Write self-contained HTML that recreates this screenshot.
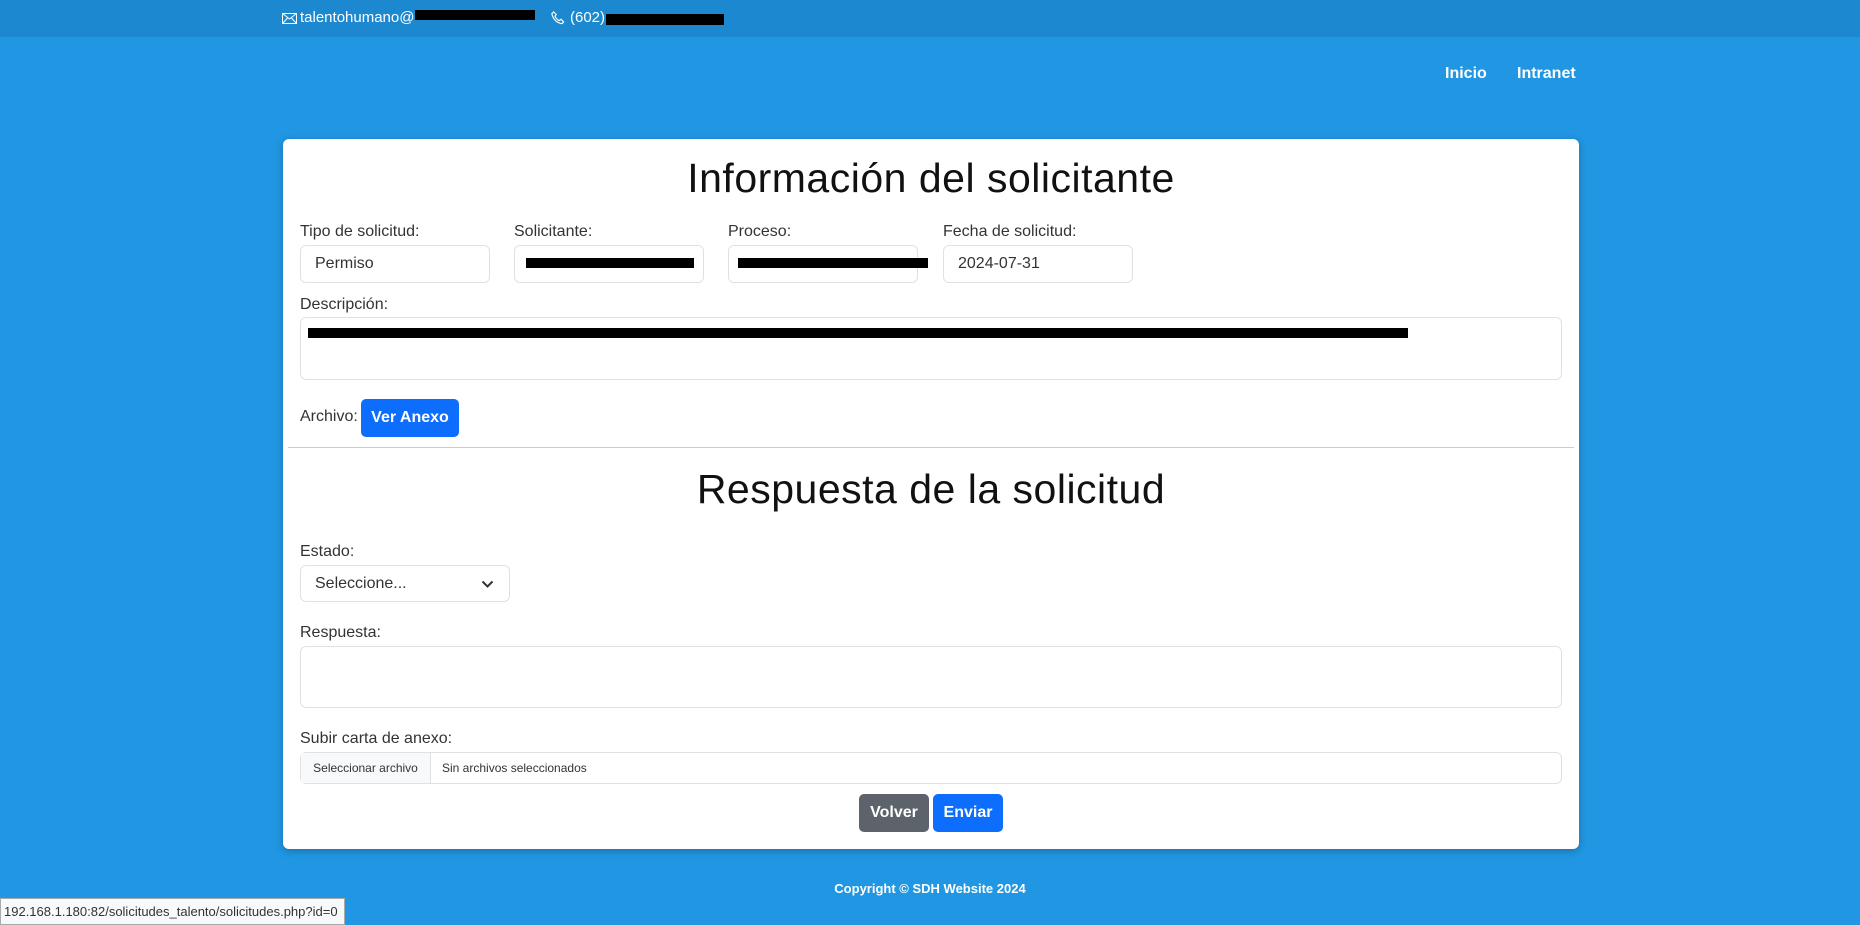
<!DOCTYPE html>
<html><head><meta charset="utf-8"><style>
*{box-sizing:border-box;margin:0;padding:0}
body{width:1860px;height:925px;background:#2196e2;font-family:"Liberation Sans",sans-serif;position:relative;overflow:hidden;color:#212529}
.top{position:absolute;left:0;top:0;width:1860px;height:37px;background:#1c88d0;color:#fff;font-size:15px}
.a{position:absolute}
.nav{color:#fff;font-weight:bold;font-size:16px}
.card{position:absolute;left:283px;top:139px;width:1296px;height:710px;background:#fff;border-radius:6px;box-shadow:0 2px 8px rgba(0,0,0,.25)}
h1{position:absolute;left:0;width:100%;text-align:center;font-weight:normal;font-size:41px;color:#111;letter-spacing:0.5px}
.lbl{position:absolute;font-size:16px;color:#333}
.inp{position:absolute;border:1px solid #dee2e6;border-radius:6px;background:#fff;font-size:16px;padding-left:14px;display:flex;align-items:center;color:#333}
.red{position:absolute;background:#000;height:13px}
.btn{position:absolute;color:#fff;border-radius:5px;font-size:16px;font-weight:bold;display:flex;align-items:center;justify-content:center}
</style></head><body>
<div class="top">
<svg class="a" style="left:282px;top:13px" width="15" height="11" viewBox="0 0 15 11"><rect x="0.5" y="0.5" width="14" height="10" fill="none" stroke="#fff"/><path d="M0.5 0.5L7.5 6L14.5 0.5M0.5 10.5L5.5 5M14.5 10.5L9.5 5" fill="none" stroke="#fff"/></svg>
<span class="a" style="left:300px;top:9px">talentohumano@</span><div class="red" style="left:415px;top:10px;width:120px;height:10px"></div>
<svg class="a" style="left:551px;top:11px" width="14" height="14" viewBox="0 0 16 16"><path d="M3 1l3 3-1.5 2c1 2 3 4 5 5l2-1.5 3 3-2 2C7 14 2 9 1 3z" fill="none" stroke="#fff" stroke-width="1.3"/></svg>
<span class="a" style="left:570px;top:9px">(602)</span><div class="red" style="left:606px;top:14px;width:118px;height:11px"></div>
</div>
<div class="a nav" style="left:1445px;top:65px">Inicio</div>
<div class="a nav" style="left:1517px;top:65px">Intranet</div>
<div class="card">
<h1 style="top:16px">Información del solicitante</h1>
<div class="lbl" style="left:17px;top:84px">Tipo de solicitud:</div>
<div class="lbl" style="left:231px;top:84px">Solicitante:</div>
<div class="lbl" style="left:445px;top:84px">Proceso:</div>
<div class="lbl" style="left:660px;top:84px">Fecha de solicitud:</div>
<div class="inp" style="left:17px;top:106px;width:190px;height:38px">Permiso</div>
<div class="inp" style="left:231px;top:106px;width:190px;height:38px"></div><div class="red" style="left:243px;top:119px;width:168px;height:10px"></div>
<div class="inp" style="left:445px;top:106px;width:190px;height:38px"></div><div class="red" style="left:455px;top:119px;width:190px;height:10px"></div>
<div class="inp" style="left:660px;top:106px;width:190px;height:38px">2024-07-31</div>
<div class="lbl" style="left:17px;top:157px">Descripción:</div>
<div class="inp" style="left:17px;top:178px;width:1262px;height:63px"></div>
<div class="red" style="left:25px;top:189px;width:1100px;height:10px"></div>
<div class="lbl" style="left:17px;top:269px">Archivo:</div>
<div class="btn" style="left:78px;top:260px;width:98px;height:38px;background:#0d6efd">Ver Anexo</div>
<div class="a" style="left:5px;top:308px;width:1286px;height:1px;background:#ccc"></div>
<h1 style="top:327px">Respuesta de la solicitud</h1>
<div class="lbl" style="left:17px;top:404px">Estado:</div>
<div class="inp" style="left:17px;top:426px;width:210px;height:37px">Seleccione...<svg class="a" style="left:180px;top:14px" width="13" height="9" viewBox="0 0 13 9"><path d="M1.5 1.5L6.5 6.5L11.5 1.5" fill="none" stroke="#333" stroke-width="2"/></svg></div>
<div class="lbl" style="left:17px;top:485px">Respuesta:</div>
<div class="inp" style="left:17px;top:507px;width:1262px;height:62px"></div>
<div class="lbl" style="left:17px;top:591px">Subir carta de anexo:</div>
<div class="inp" style="left:17px;top:613px;width:1262px;height:32px;padding:0;font-size:12px">
<div style="width:130px;height:100%;background:#f8f9fa;border-right:1px solid #dee2e6;display:flex;align-items:center;justify-content:center">Seleccionar archivo</div>
<div style="padding-left:11px">Sin archivos seleccionados</div></div>
<div class="btn" style="left:576px;top:655px;width:70px;height:38px;background:#5c636a">Volver</div>
<div class="btn" style="left:650px;top:655px;width:70px;height:38px;background:#0d6efd">Enviar</div>
</div>
<div class="a" style="left:0;width:1860px;text-align:center;top:881px;color:#fff;font-size:13px;font-weight:bold">Copyright © SDH Website 2024</div>
<div class="a" style="left:0;top:898px;width:345px;height:27px;background:#f8f9fa;border:1px solid #aaa;font-size:13px;padding:5px 3px;color:#333">192.168.1.180:82/solicitudes_talento/solicitudes.php?id=0</div>
</body></html>
